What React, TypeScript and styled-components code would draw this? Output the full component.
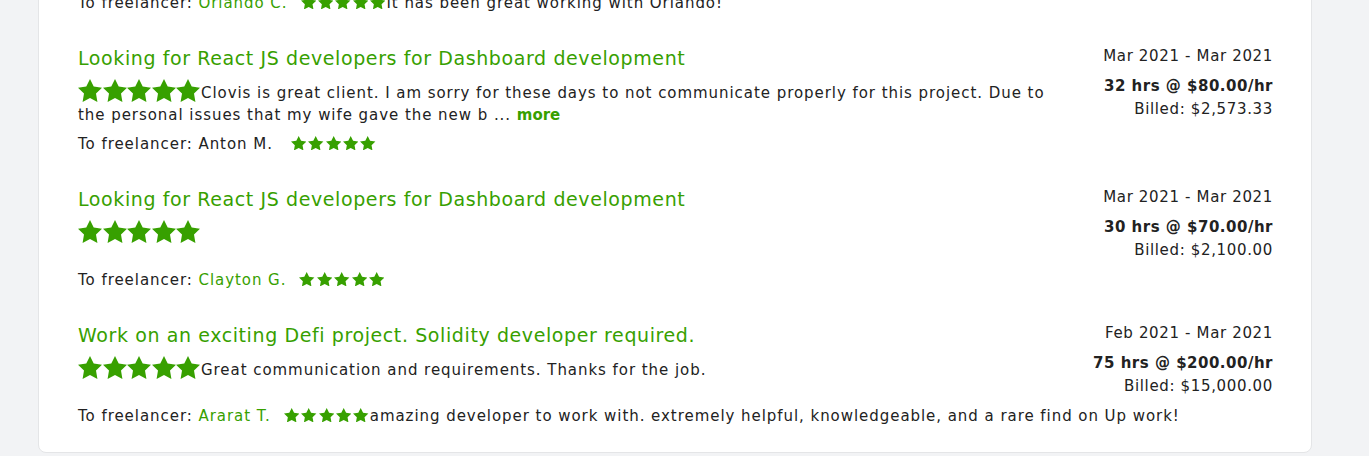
import React from "react";
import styled, { createGlobalStyle } from "styled-components";

interface Review {
  title: string;
  comment?: string;
  more?: boolean;
  period: string;
  hours: string;
  rate: string;
  billed: string;
  freelancer: string;
  linked: boolean;
  feedback?: string;
}

const reviews: Review[] = [
  {
    title: "Looking for React JS developers for Dashboard development",
    comment: "Great client, clear requirements and quick feedback.",
    period: "Feb 2021 - Mar 2021",
    hours: "40 hrs",
    rate: "$75.00/hr",
    billed: "$3,000.00",
    freelancer: "Orlando C.",
    linked: true,
    feedback: "It has been great working with Orlando!",
  },
  {
    title: "Looking for React JS developers for Dashboard development",
    comment:
      "Clovis is great client. I am sorry for these days to not communicate properly for this project. Due to the personal issues that my wife gave the new b ...",
    more: true,
    period: "Mar 2021 - Mar 2021",
    hours: "32 hrs",
    rate: "$80.00/hr",
    billed: "$2,573.33",
    freelancer: "Anton M.",
    linked: false,
  },
  {
    title: "Looking for React JS developers for Dashboard development",
    period: "Mar 2021 - Mar 2021",
    hours: "30 hrs",
    rate: "$70.00/hr",
    billed: "$2,100.00",
    freelancer: "Clayton G.",
    linked: true,
  },
  {
    title: "Work on an exciting Defi project. Solidity developer required.",
    comment: "Great communication and requirements. Thanks for the job.",
    period: "Feb 2021 - Mar 2021",
    hours: "75 hrs",
    rate: "$200.00/hr",
    billed: "$15,000.00",
    freelancer: "Ararat T.",
    linked: true,
    feedback:
      "amazing developer to work with. extremely helpful, knowledgeable, and a rare find on Up work!",
  },
];

const GlobalStyle = createGlobalStyle`
  html, body {
    margin: 0;
    padding: 0;
    background: #f2f3f5;
  }
  body {
    height: 456px;
    overflow: hidden;
    font-family: "DejaVu Sans", "Open Sans", sans-serif;
    color: #222;
  }
`;

const Page = styled.div`
  padding: 0 57px 0 38px;
`;

// the list is scrolled: the first review sits mostly above the fold
const Card = styled.section`
  margin-top: -116px;
  background: #fff;
  border: 1px solid #e4e5e7;
  border-radius: 8px;
  padding: 24px 38px 25px 39px;
`;

const Item = styled.article`
  & + & {
    margin-top: 31px;
  }
`;

const Top = styled.div`
  display: flex;
  justify-content: space-between;
  gap: 30px;
`;

const Main = styled.div`
  flex: 1;
  min-width: 0;
`;

const Title = styled.h4`
  margin: 0;
  font-size: 19px;
  line-height: 26px;
  font-weight: 400;
  letter-spacing: 0.6px;
  color: #37a000;
`;

const Comment = styled.p`
  margin: 8px 0 0;
  font-size: 15px;
  line-height: 22px;
  letter-spacing: 0.95px;
`;

const More = styled.a`
  color: #37a000;
  font-weight: 700;
  letter-spacing: 0;
  text-decoration: none;
`;

const Side = styled.div`
  flex: 0 0 185px;
  text-align: right;
  white-space: nowrap;
  font-size: 15px;
  line-height: 22px;
  letter-spacing: 0.65px;
`;

const Period = styled.div``;

const Rate = styled.div`
  margin-top: 8px;
  line-height: 23px;
  font-weight: 700;
  letter-spacing: 0.5px;
`;

const Billed = styled.div`
  line-height: 23px;
`;

const Freelancer = styled.div`
  margin-top: 7px;
  font-size: 15px;
  line-height: 22px;
  letter-spacing: 0.95px;
`;

const Name = styled.span<{ $linked: boolean }>`
  color: ${(p) => (p.$linked ? "#37a000" : "#222")};
  padding-right: ${(p) => (p.$linked ? "0" : "5px")};
`;

const Stars = styled.span<{ $big?: boolean }>`
  display: inline-flex;
  gap: ${(p) => (p.$big ? "0.5px" : "2px")};
  margin-left: ${(p) => (p.$big ? "0" : "13px")};
  margin-right: 1px;
  vertical-align: ${(p) => (p.$big ? "-4px" : "-1px")};
  svg {
    width: ${(p) => (p.$big ? "24px" : "15.4px")};
    height: ${(p) => (p.$big ? "23px" : "14.5px")};
    fill: #37a000;
  }
`;

const Star = () => (
  <svg viewBox="2 2 20 19.1" preserveAspectRatio="none">
    <path d="M12 2l3.09 6.26L22 9.27l-5 4.87 1.18 6.88L12 17.77l-6.18 3.25L7 14.14 2 9.27l6.91-1.01L12 2z" />
  </svg>
);

const Rating: React.FC<{ big?: boolean }> = ({ big }) => (
  <Stars $big={big}>
    {[0, 1, 2, 3, 4].map((i) => (
      <Star key={i} />
    ))}
  </Stars>
);

const ReviewItem: React.FC<{ review: Review }> = ({ review }) => (
  <Item>
    <Top>
      <Main>
        <Title>{review.title}</Title>
        <Comment>
          <Rating big />
          {review.comment}
          {review.more && (
            <>
              {" "}
              <More href="#">more</More>
            </>
          )}
        </Comment>
      </Main>
      <Side>
        <Period>{review.period}</Period>
        <Rate>
          {review.hours} @ {review.rate}
        </Rate>
        <Billed>Billed: {review.billed}</Billed>
      </Side>
    </Top>
    <Freelancer>
      To freelancer: <Name $linked={review.linked}>{review.freelancer}</Name>
      <Rating />
      {review.feedback}
    </Freelancer>
  </Item>
);

const App: React.FC = () => (
  <>
    <GlobalStyle />
    <Page>
      <Card>
        {reviews.map((r, i) => (
          <ReviewItem key={i} review={r} />
        ))}
      </Card>
    </Page>
  </>
);

export default App;
